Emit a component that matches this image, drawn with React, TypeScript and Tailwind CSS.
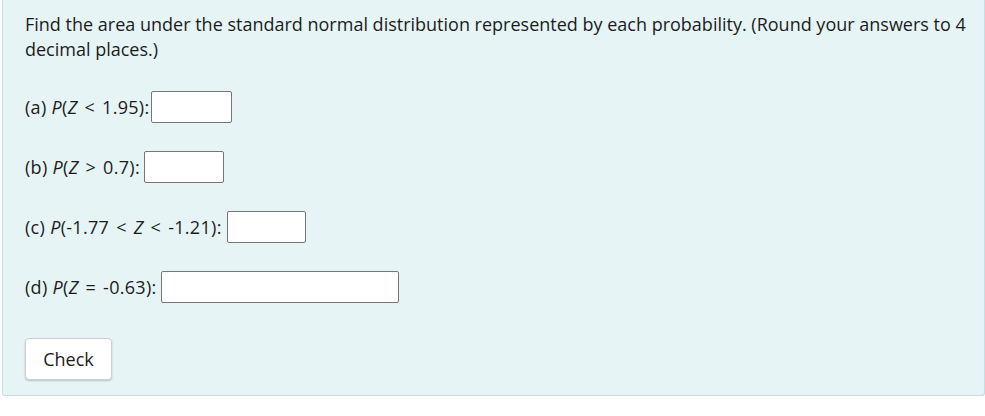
function Op({ children }: { children: React.ReactNode }) {
  return <span className="mx-[2px]">{children}</span>;
}

export default function App() {
  const rows = [
    { key: "a", body: <><i>Z</i> <Op>&lt;</Op> 1.95</>, w: "w-[81px]", mr: "mr-[1px]" },
    { key: "b", body: <><i>Z</i> <Op>&gt;</Op> 0.7</>, w: "w-[80px]", mr: "mr-[4px]" },
    { key: "c", body: <>-1.77 <Op>&lt;</Op> <i>Z</i> <Op>&lt;</Op> -1.21</>, w: "w-[79px]", mr: "mr-[5px]" },
    { key: "d", body: <><i>Z</i> <Op>=</Op> -0.63</>, w: "w-[238px]", mr: "mr-[4px]" },
  ];

  return (
    <div className="h-[416px] bg-white pl-[2px]" style={{ fontFamily: '"Open Sans", "Noto Sans", sans-serif' }}>
      <div className="h-[396px] border border-t-0 border-[#c3e0e5] rounded-b-[3px] bg-[#e6f4f6] pl-[22px] pt-[12px] text-[18px] text-[#1c1c1c]">
        <p className="leading-[25px]">
          Find the area under the standard normal distribution represented by each probability. (Round your answers to 4
          decimal places.)
        </p>
        <div className="mt-[29px] flex flex-col gap-[28px]">
          {rows.map((r) => (
            <div key={r.key} className="flex items-center h-[32px]">
              <span className={`${r.mr} tracking-[0.3px]`}>
                ({r.key}) <i>P</i>({r.body}):
              </span>
              <input
                type="text"
                className={`h-[32px] ${r.w} rounded-[2px] border border-[#767676] bg-white`}
              />
            </div>
          ))}
        </div>
        <button className="mt-[35px] h-[42px] w-[87px] rounded-[4px] border border-[#cfcfcf] bg-white text-[18px] text-[#1c1c1c] shadow-[0_1px_2px_rgba(0,0,0,0.2)]">
          Check
        </button>
      </div>
    </div>
  );
}
